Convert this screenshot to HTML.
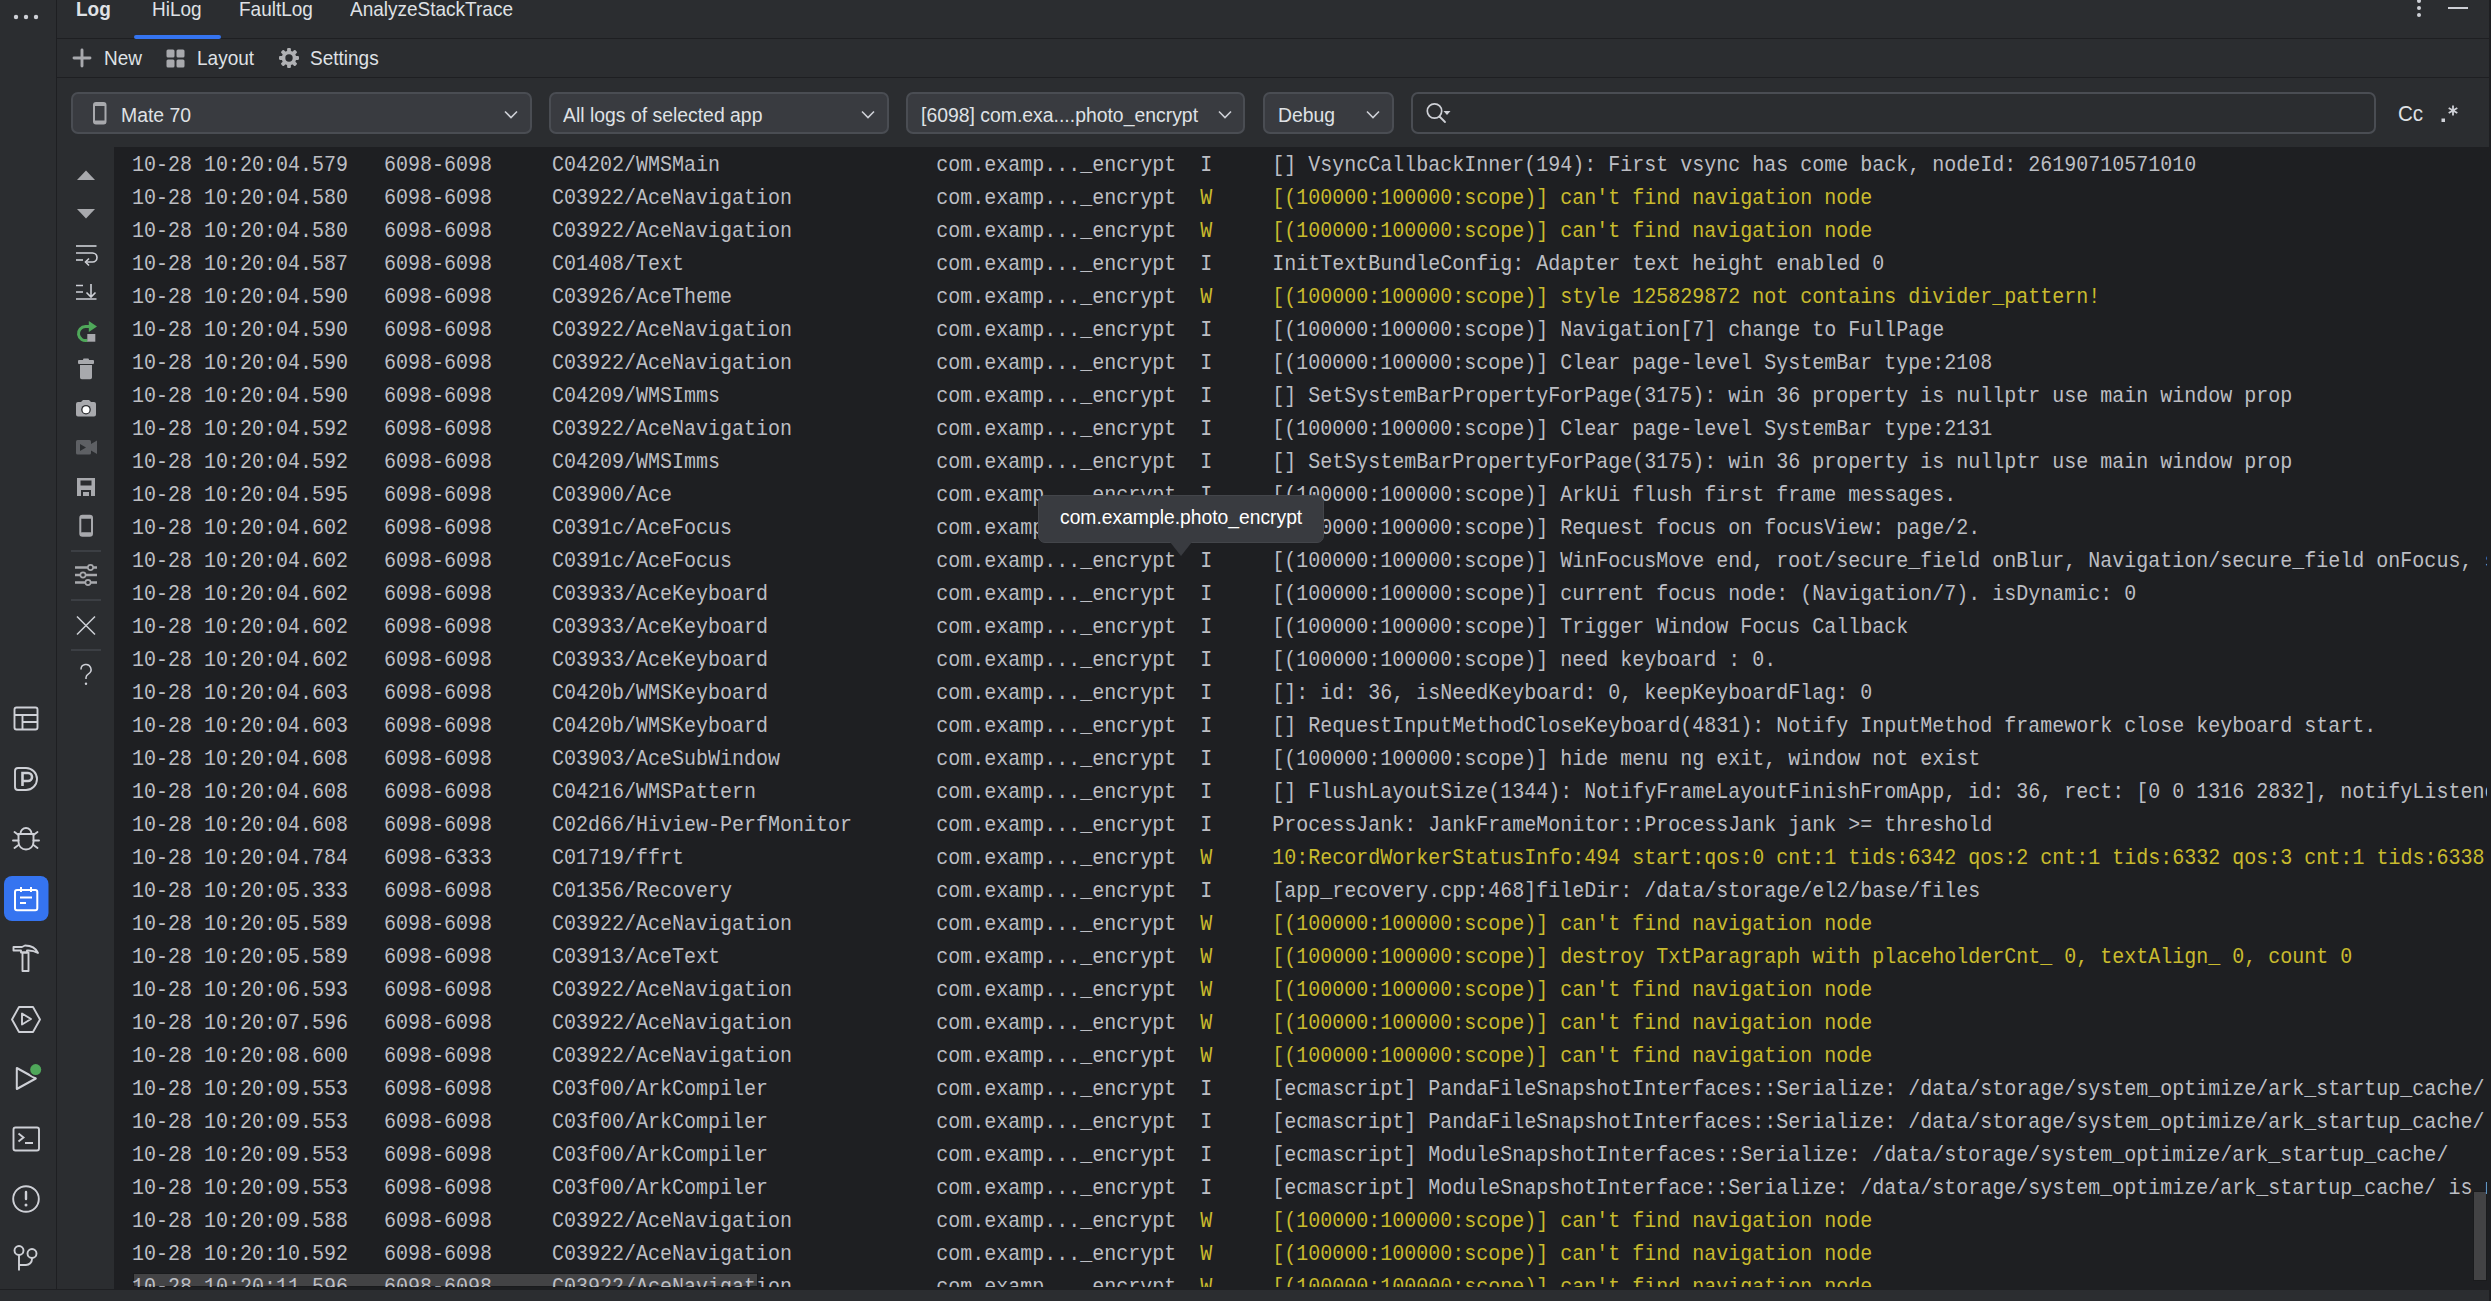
<!DOCTYPE html>
<html><head><meta charset="utf-8">
<style>
*{margin:0;padding:0;box-sizing:border-box}
html,body{width:2491px;height:1301px;overflow:hidden;background:#2b2d30}
body{position:relative;font-family:"Liberation Sans",sans-serif;color:#dfe1e5}
.a{position:absolute}
.vline{position:absolute;width:1px;background:#1e1f22}
.hline{position:absolute;height:1px;background:#1e1f22}
.tab{position:absolute;top:-3px;font-size:19px;line-height:26px;color:#dfe1e5;white-space:nowrap;transform:scaleY(1.075);transform-origin:0 19.6px}
.tb{position:absolute;top:46px;font-size:19px;line-height:26px;color:#dfe1e5;white-space:nowrap;transform:scaleY(1.075);transform-origin:0 19.6px}
.dd{position:absolute;top:92px;height:42px;background:#393b40;border:2px solid #4a4d53;border-radius:7px}
.ddt{position:absolute;top:102px;font-size:19.4px;line-height:26px;color:#dfe1e5;white-space:nowrap;transform:scaleY(1.075);transform-origin:0 19.6px}
.chev{position:absolute;top:110px}
#log{position:absolute;left:114px;top:147px;width:2375px;height:1142px;background:#1e1f22;overflow:hidden}
.r{position:absolute;left:18px;height:33px;line-height:33px;font-family:"Liberation Mono",monospace;font-size:20px;transform:scaleY(1.1);transform-origin:0 22px;color:#bcbec4;white-space:pre}
.w{color:#c9bb2e}
.sep{position:absolute;left:71px;width:30px;height:2px;background:#3c3f44}
svg{position:absolute;overflow:visible}
</style></head><body>

<!-- activity bar -->
<div class="vline" style="left:56px;top:0;height:1290px"></div>
<svg style="left:0;top:0" width="56" height="40"><circle cx="16" cy="17" r="2.2" fill="#ced0d6"/><circle cx="26" cy="17" r="2.2" fill="#ced0d6"/><circle cx="36" cy="17" r="2.2" fill="#ced0d6"/></svg>

<!-- tabs -->
<div class="hline" style="left:57px;top:38px;width:2432px"></div>
<div class="tab" style="left:76px;font-weight:bold">Log</div>
<div class="tab" style="left:152px">HiLog</div>
<div class="tab" style="left:239px">FaultLog</div>
<div class="tab" style="left:350px">AnalyzeStackTrace</div>
<div class="a" style="left:134px;top:35px;width:87px;height:4px;background:#3574f0;border-radius:2px"></div>
<svg style="left:2410px;top:0" width="20" height="20"><circle cx="9" cy="1" r="2" fill="#ced0d6"/><circle cx="9" cy="8" r="2" fill="#ced0d6"/><circle cx="9" cy="15" r="2" fill="#ced0d6"/></svg>
<div class="a" style="left:2448px;top:7px;width:20px;height:2px;background:#ced0d6"></div>

<!-- toolbar -->
<div class="hline" style="left:57px;top:77px;width:2432px"></div>
<svg style="left:72px;top:48px" width="20" height="20"><path d="M10 2v16M2 10h16" stroke="#a8a9ad" stroke-width="2.9" stroke-linecap="round"/></svg>
<div class="tb" style="left:104px">New</div>
<svg style="left:166px;top:49px" width="20" height="20"><rect x="0.5" y="0.5" width="8" height="8" rx="1.5" fill="#a8a9ad"/><rect x="10.5" y="0.5" width="8" height="8" rx="1.5" fill="#a8a9ad"/><rect x="0.5" y="10.5" width="8" height="8" rx="1.5" fill="#a8a9ad"/><rect x="10.5" y="10.5" width="8" height="8" rx="1.5" fill="#a8a9ad"/></svg>
<div class="tb" style="left:197px">Layout</div>
<svg style="left:278px;top:47px" width="22" height="22"><g transform="translate(11 11)" fill="#b0b1b4"><circle r="7.3"/><g id="tooth"><rect x="-1.9" y="-10" width="3.8" height="5" rx="1.1"/></g><use href="#tooth" transform="rotate(45)"/><use href="#tooth" transform="rotate(90)"/><use href="#tooth" transform="rotate(135)"/><use href="#tooth" transform="rotate(180)"/><use href="#tooth" transform="rotate(225)"/><use href="#tooth" transform="rotate(270)"/><use href="#tooth" transform="rotate(315)"/><circle r="3.7" fill="#2b2d30"/></g></svg>
<div class="tb" style="left:310px">Settings</div>

<!-- filter row -->
<div class="dd" style="left:71px;width:461px"></div>
<svg style="left:93px;top:102px" width="14" height="23"><rect x="1" y="1" width="11.5" height="20.5" rx="2" fill="none" stroke="#a8a9ad" stroke-width="2"/><rect x="1" y="1" width="11.5" height="3" fill="#a8a9ad"/><rect x="1" y="18.5" width="11.5" height="3" fill="#a8a9ad"/></svg>
<div class="ddt" style="left:121px">Mate 70</div>
<svg class="chev" style="left:504px" width="14" height="10"><path d="M1 1.5l6 6 6-6" fill="none" stroke="#ced0d6" stroke-width="1.6"/></svg>

<div class="dd" style="left:549px;width:340px"></div>
<div class="ddt" style="left:563px">All logs of selected app</div>
<svg class="chev" style="left:861px" width="14" height="10"><path d="M1 1.5l6 6 6-6" fill="none" stroke="#ced0d6" stroke-width="1.6"/></svg>

<div class="dd" style="left:906px;width:339px"></div>
<div class="ddt" style="left:921px">[6098] com.exa....photo_encrypt</div>
<svg class="chev" style="left:1218px" width="14" height="10"><path d="M1 1.5l6 6 6-6" fill="none" stroke="#ced0d6" stroke-width="1.6"/></svg>

<div class="dd" style="left:1263px;width:131px"></div>
<div class="ddt" style="left:1278px">Debug</div>
<svg class="chev" style="left:1366px" width="14" height="10"><path d="M1 1.5l6 6 6-6" fill="none" stroke="#ced0d6" stroke-width="1.6"/></svg>

<div class="dd" style="left:1411px;width:965px;background:#2b2d30"></div>
<svg style="left:1425px;top:102px" width="30" height="22"><circle cx="9.5" cy="9" r="7.2" fill="none" stroke="#ced0d6" stroke-width="1.7"/><path d="M14.5 14.5l5.5 5.5" stroke="#ced0d6" stroke-width="1.8" stroke-linecap="round"/><path d="M18.5 9h7l-3.5 4z" fill="#ced0d6"/></svg>
<div class="ddt" style="left:2398px;top:101px;font-size:20.6px">Cc</div>
<svg style="left:2438px;top:100px" width="24" height="26"><rect x="3.5" y="18.5" width="3.5" height="3.5" fill="#ced0d6"/><g stroke="#ced0d6" stroke-width="1.8"><path d="M15 5.5v10M10.7 8l8.6 5M10.7 13l8.6-5"/></g></svg>

<!-- right border -->
<div class="a" style="left:2489px;top:0;width:2px;height:1301px;background:#1e1f22"></div>

<!-- left tool column icons -->
<svg style="left:60px;top:150px" width="54" height="540">
 <g fill="#a8a9ad" stroke="none">
  <path d="M26 20.5l9 9.5h-18z"/>
  <path d="M17 59h18l-9 9.5z"/>
 </g>
 <g fill="none" stroke="#ced0d6" stroke-width="1.6">
  <path d="M16 96h20.5"/>
  <path d="M16 103h16.5a4.5 4.5 0 0 1 0 9h-6"/>
  <path d="M29 108.5l-3.5 3.5 3.5 3.5"/>
  <path d="M16 110h7"/>
  <path d="M16 135.5h7M16 142h7M16 149h20.5"/>
  <path d="M31 134v13M26.5 142.5l4.5 4.5 4.5-4.5"/>
 </g>
 <!-- restart -->
 <g>
  <path d="M29.5 176.5H25.5A7 7 0 1 0 27.5 190.2" fill="none" stroke="#4fa85a" stroke-width="3"/>
  <path d="M28.8 171l8.2 5.5-8.2 5.5z" fill="#4fa85a"/>
  <rect x="27.3" y="184" width="8" height="7.7" fill="#a8a9ad"/>
 </g>
 <!-- trash -->
 <g fill="#a8a9ad">
  <rect x="18" y="210" width="16" height="4" rx="1"/>
  <rect x="23" y="208.5" width="6" height="3" rx="1"/>
  <path d="M20 215h12v12.5a1.8 1.8 0 0 1-1.8 1.8h-8.4a1.8 1.8 0 0 1-1.8-1.8z"/>
 </g>
 <!-- camera -->
 <g>
  <path d="M16 254a2 2 0 0 1 2-2h3l2-2h6l2 2h3a2 2 0 0 1 2 2v10.5a2 2 0 0 1-2 2h-16a2 2 0 0 1-2-2z" fill="#a8a9ad"/>
  <circle cx="26" cy="259.7" r="4.8" fill="#2b2d30"/>
  <circle cx="26" cy="259.7" r="3.5" fill="#ffffff"/>
 </g>
 <!-- video (disabled) -->
 <g fill="#5e6064">
  <rect x="16" y="290" width="15" height="14.5" rx="1.5"/>
  <path d="M31 294l6-3.5v13.5l-6-3.5z"/>
 </g>
 <path d="M20 294l6 3.5-6 3.5z" fill="#2b2d30"/>
 <!-- save -->
 <g>
  <path d="M17 328h18v18h-18z" fill="#a8a9ad"/>
  <rect x="20.5" y="330.5" width="11" height="5" fill="#2b2d30"/>
  <rect x="21" y="340" width="10" height="6" fill="#2b2d30"/>
  <rect x="23" y="342" width="6" height="4" fill="#a8a9ad"/>
 </g>
 <!-- phone -->
 <rect x="20.3" y="365.7" width="11.7" height="20" rx="2.2" fill="none" stroke="#a8a9ad" stroke-width="2"/>
 <rect x="20.3" y="382.2" width="11.7" height="3.5" rx="1.5" fill="#a8a9ad"/>
 <rect x="20.3" y="365.7" width="11.7" height="3" rx="1.5" fill="#a8a9ad"/>
 <!-- sliders -->
 <g stroke="#a8a9ad" stroke-width="2.4" fill="none">
  <path d="M15 417.5h22M15 425h22M15 432.5h22"/>
 </g>
 <g fill="#2b2d30" stroke="#a8a9ad" stroke-width="1.6">
  <circle cx="30.5" cy="417.5" r="2.6"/>
  <circle cx="23" cy="425" r="2.6"/>
  <circle cx="28" cy="432.5" r="2.6"/>
 </g>
 <!-- close -->
 <path d="M17 466.5l18 18M35 466.5l-18 18" stroke="#ced0d6" stroke-width="1.5"/>
</svg>
<div class="sep" style="top:550px"></div>
<div class="sep" style="top:599px"></div>
<div class="sep" style="top:649px"></div>
<svg style="left:0;top:0" width="120" height="700"><path d="M81 669.5a5 5 0 1 1 7.5 4.3c-1.6 0.9-2.5 2-2.5 3.8v1.5" fill="none" stroke="#ced0d6" stroke-width="1.5"/><circle cx="86" cy="683.8" r="1.2" fill="#ced0d6"/></svg>

<!-- activity bar icons -->
<svg style="left:0;top:690px" width="56" height="600">
 <g fill="none" stroke="#ced0d6" stroke-width="1.9">
  <rect x="14.5" y="17.5" width="23" height="22" rx="2"/>
  <path d="M14.5 25h23M22.5 25v14.5M22.5 32h15"/>
  <path d="M18 78h8a11 11 0 0 1 0 22h-8a3 3 0 0 1-3-3v-16a3 3 0 0 1 3-3z"/>
 </g>
 <path d="M22.5 96V83h5.5a4 4 0 0 1 0 8h-5.5" fill="none" stroke="#ced0d6" stroke-width="2.6"/>
 <!-- bug -->
 <g fill="none" stroke="#ced0d6" stroke-width="1.9" stroke-linecap="round">
  <path d="M20.5 143.5a5.5 5.5 0 0 1 11 0"/>
  <path d="M18.5 144h15v8a7.5 7.5 0 0 1-15 0z"/>
  <path d="M13 150.5h5.5M33.5 150.5h5.5M14.5 142l4 3M37.5 142l-4 3M14.5 158l4-3M37.5 158l-4-3"/>
 </g>
 <!-- active log -->
 <rect x="4" y="186" width="44.5" height="45" rx="8" fill="#3574f0"/>
 <g fill="none" stroke="#ffffff" stroke-width="2">
  <rect x="15" y="200" width="22.3" height="20.3" rx="2"/>
  <path d="M21 197v5M31 197v5M20 207.5h12M20 213h6"/>
 </g>
 <!-- hammer -->
 <g fill="none" stroke="#ced0d6" stroke-width="1.9" stroke-linejoin="round">
  <path d="M13.5 257h8.5l3-1.5c6 0 11 3 13 7.5c-3.5-2-7-2.5-9.5-2.5h-1.5v2h-6v-2h-7.5z"/>
  <path d="M22.5 262.5h6v18.5h-6z"/>
 </g>
 <!-- hex play -->
 <g fill="none" stroke="#ced0d6" stroke-width="1.9" stroke-linejoin="round">
  <path d="M19 317h14l7 12.5-7 12.5h-14l-7-12.5z"/>
  <path d="M22 323.5v11l9-5.5z"/>
 </g>
 <!-- run -->
 <path d="M16.8 378v21l19-10.5z" fill="none" stroke="#ced0d6" stroke-width="2" stroke-linejoin="round"/>
 <circle cx="35.7" cy="379.6" r="7.2" fill="#2b2d30"/><circle cx="35.7" cy="379.6" r="5.5" fill="#4fa85a"/>
 <!-- terminal -->
 <g fill="none" stroke="#ced0d6" stroke-width="1.9">
  <rect x="13.5" y="437.5" width="25.5" height="23" rx="2"/>
  <path d="M18.5 443.5l5 4-5 4M25 453h8"/>
 </g>
 <!-- problems -->
 <g fill="none" stroke="#ced0d6" stroke-width="1.9">
  <circle cx="26" cy="509" r="12.8"/>
 </g>
 <path d="M26 502v7" stroke="#ced0d6" stroke-width="2.4" stroke-linecap="round"/>
 <circle cx="26" cy="515" r="1.5" fill="#ced0d6"/>
 <!-- git -->
 <g fill="none" stroke="#ced0d6" stroke-width="1.9">
  <circle cx="19" cy="560.5" r="4.5"/>
  <circle cx="32" cy="563.5" r="4.5"/>
  <path d="M19 565v15.5M19 575h7a6 6 0 0 0 6-6v-1"/>
 </g>
</svg>

<!-- bottom band -->
<div class="hline" style="left:0;top:1289px;width:2491px"></div>

<!-- log -->
<div id="log">
<div class="a" style="left:20px;top:1127px;width:623px;height:12px;background:#434345;box-shadow:0 0 0 1px rgba(0,0,0,0.12)"></div>
<div class="a" style="left:2360px;top:1045px;width:12px;height:88px;background:#434345;box-shadow:0 0 0 1px rgba(0,0,0,0.12)"></div>
<div class="a" style="left:0;top:0;width:2373px;height:1140px;overflow:hidden">
<div class="r" style="top:2px">10-28 10:20:04.579   6098-6098     C04202/WMSMain                  com.examp..._encrypt  I     [] VsyncCallbackInner(194): First vsync has come back, nodeId: 26190710571010</div>
<div class="r" style="top:35px">10-28 10:20:04.580   6098-6098     C03922/AceNavigation            com.examp..._encrypt  <span class="w">W     [(100000:100000:scope)] can&#x27;t find navigation node</span></div>
<div class="r" style="top:68px">10-28 10:20:04.580   6098-6098     C03922/AceNavigation            com.examp..._encrypt  <span class="w">W     [(100000:100000:scope)] can&#x27;t find navigation node</span></div>
<div class="r" style="top:101px">10-28 10:20:04.587   6098-6098     C01408/Text                     com.examp..._encrypt  I     InitTextBundleConfig: Adapter text height enabled 0</div>
<div class="r" style="top:134px">10-28 10:20:04.590   6098-6098     C03926/AceTheme                 com.examp..._encrypt  <span class="w">W     [(100000:100000:scope)] style 125829872 not contains divider_pattern!</span></div>
<div class="r" style="top:167px">10-28 10:20:04.590   6098-6098     C03922/AceNavigation            com.examp..._encrypt  I     [(100000:100000:scope)] Navigation[7] change to FullPage</div>
<div class="r" style="top:200px">10-28 10:20:04.590   6098-6098     C03922/AceNavigation            com.examp..._encrypt  I     [(100000:100000:scope)] Clear page-level SystemBar type:2108</div>
<div class="r" style="top:233px">10-28 10:20:04.590   6098-6098     C04209/WMSImms                  com.examp..._encrypt  I     [] SetSystemBarPropertyForPage(3175): win 36 property is nullptr use main window prop</div>
<div class="r" style="top:266px">10-28 10:20:04.592   6098-6098     C03922/AceNavigation            com.examp..._encrypt  I     [(100000:100000:scope)] Clear page-level SystemBar type:2131</div>
<div class="r" style="top:299px">10-28 10:20:04.592   6098-6098     C04209/WMSImms                  com.examp..._encrypt  I     [] SetSystemBarPropertyForPage(3175): win 36 property is nullptr use main window prop</div>
<div class="r" style="top:332px">10-28 10:20:04.595   6098-6098     C03900/Ace                      com.examp..._encrypt  I     [(100000:100000:scope)] ArkUi flush first frame messages.</div>
<div class="r" style="top:365px">10-28 10:20:04.602   6098-6098     C0391c/AceFocus                 com.examp..._encrypt  I     [(100000:100000:scope)] Request focus on focusView: page/2.</div>
<div class="r" style="top:398px">10-28 10:20:04.602   6098-6098     C0391c/AceFocus                 com.examp..._encrypt  I     [(100000:100000:scope)] WinFocusMove end, root/secure_field onBlur, Navigation/secure_field onFocus, start</div>
<div class="r" style="top:431px">10-28 10:20:04.602   6098-6098     C03933/AceKeyboard              com.examp..._encrypt  I     [(100000:100000:scope)] current focus node: (Navigation/7). isDynamic: 0</div>
<div class="r" style="top:464px">10-28 10:20:04.602   6098-6098     C03933/AceKeyboard              com.examp..._encrypt  I     [(100000:100000:scope)] Trigger Window Focus Callback</div>
<div class="r" style="top:497px">10-28 10:20:04.602   6098-6098     C03933/AceKeyboard              com.examp..._encrypt  I     [(100000:100000:scope)] need keyboard : 0.</div>
<div class="r" style="top:530px">10-28 10:20:04.603   6098-6098     C0420b/WMSKeyboard              com.examp..._encrypt  I     []: id: 36, isNeedKeyboard: 0, keepKeyboardFlag: 0</div>
<div class="r" style="top:563px">10-28 10:20:04.603   6098-6098     C0420b/WMSKeyboard              com.examp..._encrypt  I     [] RequestInputMethodCloseKeyboard(4831): Notify InputMethod framework close keyboard start.</div>
<div class="r" style="top:596px">10-28 10:20:04.608   6098-6098     C03903/AceSubWindow             com.examp..._encrypt  I     [(100000:100000:scope)] hide menu ng exit, window not exist</div>
<div class="r" style="top:629px">10-28 10:20:04.608   6098-6098     C04216/WMSPattern               com.examp..._encrypt  I     [] FlushLayoutSize(1344): NotifyFrameLayoutFinishFromApp, id: 36, rect: [0 0 1316 2832], notifyListener: 1</div>
<div class="r" style="top:662px">10-28 10:20:04.608   6098-6098     C02d66/Hiview-PerfMonitor       com.examp..._encrypt  I     ProcessJank: JankFrameMonitor::ProcessJank jank &gt;= threshold</div>
<div class="r" style="top:695px">10-28 10:20:04.784   6098-6333     C01719/ffrt                     com.examp..._encrypt  <span class="w">W     10:RecordWorkerStatusInfo:494 start:qos:0 cnt:1 tids:6342 qos:2 cnt:1 tids:6332 qos:3 cnt:1 tids:6338</span></div>
<div class="r" style="top:728px">10-28 10:20:05.333   6098-6098     C01356/Recovery                 com.examp..._encrypt  I     [app_recovery.cpp:468]fileDir: /data/storage/el2/base/files</div>
<div class="r" style="top:761px">10-28 10:20:05.589   6098-6098     C03922/AceNavigation            com.examp..._encrypt  <span class="w">W     [(100000:100000:scope)] can&#x27;t find navigation node</span></div>
<div class="r" style="top:794px">10-28 10:20:05.589   6098-6098     C03913/AceText                  com.examp..._encrypt  <span class="w">W     [(100000:100000:scope)] destroy TxtParagraph with placeholderCnt_ 0, textAlign_ 0, count 0</span></div>
<div class="r" style="top:827px">10-28 10:20:06.593   6098-6098     C03922/AceNavigation            com.examp..._encrypt  <span class="w">W     [(100000:100000:scope)] can&#x27;t find navigation node</span></div>
<div class="r" style="top:860px">10-28 10:20:07.596   6098-6098     C03922/AceNavigation            com.examp..._encrypt  <span class="w">W     [(100000:100000:scope)] can&#x27;t find navigation node</span></div>
<div class="r" style="top:893px">10-28 10:20:08.600   6098-6098     C03922/AceNavigation            com.examp..._encrypt  <span class="w">W     [(100000:100000:scope)] can&#x27;t find navigation node</span></div>
<div class="r" style="top:926px">10-28 10:20:09.553   6098-6098     C03f00/ArkCompiler              com.examp..._encrypt  I     [ecmascript] PandaFileSnapshotInterfaces::Serialize: /data/storage/system_optimize/ark_startup_cache/</div>
<div class="r" style="top:959px">10-28 10:20:09.553   6098-6098     C03f00/ArkCompiler              com.examp..._encrypt  I     [ecmascript] PandaFileSnapshotInterfaces::Serialize: /data/storage/system_optimize/ark_startup_cache/</div>
<div class="r" style="top:992px">10-28 10:20:09.553   6098-6098     C03f00/ArkCompiler              com.examp..._encrypt  I     [ecmascript] ModuleSnapshotInterfaces::Serialize: /data/storage/system_optimize/ark_startup_cache/</div>
<div class="r" style="top:1025px">10-28 10:20:09.553   6098-6098     C03f00/ArkCompiler              com.examp..._encrypt  I     [ecmascript] ModuleSnapshotInterface::Serialize: /data/storage/system_optimize/ark_startup_cache/ is not exist</div>
<div class="r" style="top:1058px">10-28 10:20:09.588   6098-6098     C03922/AceNavigation            com.examp..._encrypt  <span class="w">W     [(100000:100000:scope)] can&#x27;t find navigation node</span></div>
<div class="r" style="top:1091px">10-28 10:20:10.592   6098-6098     C03922/AceNavigation            com.examp..._encrypt  <span class="w">W     [(100000:100000:scope)] can&#x27;t find navigation node</span></div>
<div class="r" style="top:1124px">10-28 10:20:11.596   6098-6098     C03922/AceNavigation            com.examp..._encrypt  <span class="w">W     [(100000:100000:scope)] can&#x27;t find navigation node</span></div>
</div>
</div>

<!-- tooltip -->
<div class="a" style="left:1038px;top:495px;width:286px;height:48px;background:#393b40;border-radius:7px;border:1px solid #43454a"></div>
<svg style="left:1170px;top:542px" width="24" height="16"><path d="M0 0h22l-11 14z" fill="#393b40"/></svg>
<div class="a" style="left:1060px;top:505px;font-size:19.3px;line-height:26px;color:#ffffff;white-space:nowrap;transform:scaleY(1.06);transform-origin:0 19.8px">com.example.photo_encrypt</div>

</body></html>
